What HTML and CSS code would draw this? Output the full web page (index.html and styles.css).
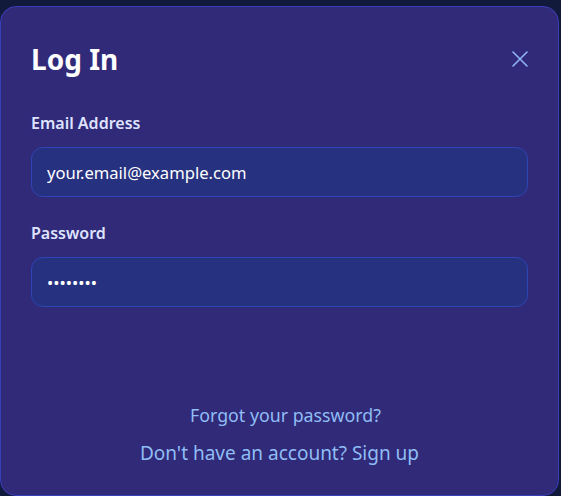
FILE: index.html
```html
<!DOCTYPE html>
<html>
<head>
<meta charset="utf-8">
<link rel="stylesheet" href="styles.css">
</head>
<body>
<div class="modal">
  <div class="header">
    <h1 class="title">Log In</h1>
    <button class="close" aria-label="Close">
      <svg width="16" height="16" viewBox="0 0 16 16"><path d="M1 1L15 15M15 1L1 15" stroke="#8fb3f5" stroke-width="1.6" stroke-linecap="round"/></svg>
    </button>
  </div>
  <form class="form">
    <label class="field">
      <span class="label">Email Address</span>
      <input class="input" type="email" value="your.email@example.com">
    </label>
    <label class="field">
      <span class="label">Password</span>
      <input class="input" type="password" value="password">
    </label>
  </form>
  <div class="links">
    <a class="forgot" href="#">Forgot your password?</a>
    <a class="signup" href="#">Don't have an account? Sign up</a>
  </div>
</div>
</body>
</html>
```
FILE: styles.css
```css
* { box-sizing: border-box; }
html, body { margin: 0; padding: 0; }
body {
  background: #121a3c;
  font-family: "Noto Sans", "Open Sans", sans-serif;
  width: 561px;
  height: 496px;
  overflow: hidden;
}
.modal {
  margin: 6px 2px 0 0;
  height: 490px;
  background: #302a78;
  border: 1px solid #3a3db8;
  border-radius: 16px;
  padding: 30px 30px 0 30px;
  display: flex;
  flex-direction: column;
}
.header {
  display: flex;
  justify-content: space-between;
  align-items: center;
  height: 44px;
}
.title {
  margin: 0;
  color: #ffffff;
  font-size: 28px;
  font-weight: 700;
  line-height: 44px;
}
.close {
  background: none;
  border: 0;
  padding: 0;
  width: 16px;
  height: 16px;
  display: flex;
}
.form {
  margin-top: 31px;
  display: flex;
  flex-direction: column;
  gap: 25px;
}
.field {
  display: flex;
  flex-direction: column;
  gap: 13px;
}
.label {
  color: #dfe3ff;
  font-size: 16px;
  font-weight: 600;
  line-height: 22px;
}
.input {
  height: 50px;
  width: 100%;
  background: #26327f;
  border: 1px solid #2d45b5;
  border-radius: 12px;
  padding: 0 15px;
  color: #ffffff;
  font-family: inherit;
  font-size: 16.6px;
  outline: none;
}
.links {
  margin-top: 96px;
  display: flex;
  flex-direction: column;
  align-items: center;
  gap: 13px;
}
.forgot {
  color: #90bdf5;
  font-size: 17.8px;
  text-decoration: none;
  line-height: 24px;
  margin-left: 12px;
}
.signup {
  color: #90bdf5;
  font-size: 19px;
  text-decoration: none;
  line-height: 26px;
}
```
